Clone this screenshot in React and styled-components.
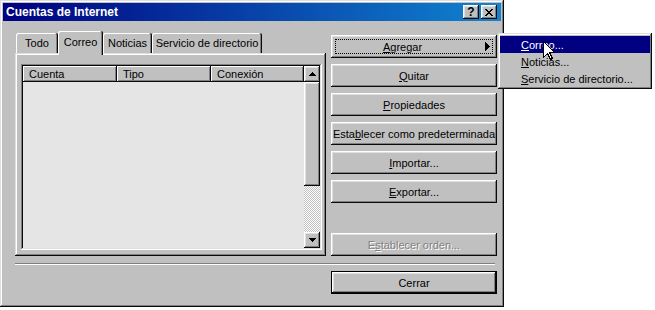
import React from 'react';
import styled, { createGlobalStyle, css } from 'styled-components';

const GlobalStyle = createGlobalStyle`
  html, body { margin: 0; padding: 0; background: #fff; }
  body { font-family: 'Liberation Sans', Arial, sans-serif; font-size: 11px; color: #000; }
  #root { position: relative; width: 655px; height: 310px; overflow: hidden; }
`;

const windowBevel = css`
  box-shadow: inset -1px -1px #0a0a0a, inset 1px 1px #dfdfdf, inset -2px -2px #808080, inset 2px 2px #fff;
`;
const buttonBevel = css`
  box-shadow: inset -1px -1px #0a0a0a, inset 1px 1px #fff, inset -2px -2px #808080, inset 2px 2px #dfdfdf;
`;
const sunkenBevel = css`
  box-shadow: inset -1px -1px #fff, inset 1px 1px #808080, inset -2px -2px #dfdfdf, inset 2px 2px #0a0a0a;
`;

const Window = styled.div`
  width: 504px;
  height: 307px;
  box-sizing: border-box;
  padding: 3px;
  background: #c0c0c0;
  ${windowBevel}
  display: flex;
  flex-direction: column;
`;

const TitleBar = styled.div`
  height: 18px;
  display: flex;
  align-items: center;
  padding: 0 4px 0 3px;
  background: linear-gradient(90deg, #000080, #1084d0);
  color: #fff;
  font-weight: bold;
  font-size: 12px;
`;

const Title = styled.span`
  flex: 1;
`;

const TitleButtons = styled.div`
  display: flex;
  gap: 2px;
`;

const TitleButton = styled.div`
  width: 16px;
  height: 14px;
  box-sizing: border-box;
  background: #c0c0c0;
  ${buttonBevel}
  display: flex;
  align-items: center;
  justify-content: center;
  color: #000;
  font-size: 12px;
  font-weight: bold;
  line-height: 1;
`;

const Body = styled.div`
  padding: 10px 4px 0 12px;
  display: flex;
  flex-direction: column;
`;

const MainRow = styled.div`
  display: flex;
  gap: 5px;
`;

const LeftCol = styled.div`
  width: 311px;
  display: flex;
  flex-direction: column;
`;

const TabStrip = styled.div`
  height: 22px;
  display: flex;
  align-items: flex-end;
  padding-left: 1px;
`;

const Tab = styled.div`
  width: ${(p) => p.$w}px;
  height: ${(p) => (p.$active ? 24 : 20)}px;
  margin-bottom: ${(p) => (p.$active ? -2 : 0)}px;
  padding-bottom: ${(p) => (p.$active ? 3 : 0)}px;
  box-sizing: border-box;
  display: flex;
  align-items: center;
  justify-content: center;
  background: #c0c0c0;
  position: relative;
  z-index: ${(p) => (p.$active ? 1 : 0)};
  border-radius: 2px 2px 0 0;
  box-shadow: inset -1px 0 #0a0a0a, inset 1px 1px #fff, inset -2px 0 #808080;
  white-space: nowrap;
`;

const Panel = styled.div`
  height: 203px;
  box-sizing: border-box;
  background: #c0c0c0;
  ${windowBevel}
  padding: 11px 4px 6px 6px;
`;

const ListView = styled.div`
  height: 100%;
  box-sizing: border-box;
  padding: 2px;
  ${sunkenBevel}
  background: #e5e5e5;
  display: flex;
`;

const ListMain = styled.div`
  flex: 1;
  display: flex;
  flex-direction: column;
`;

const HeaderRow = styled.div`
  height: 16px;
  display: flex;
`;

const HeaderCell = styled.div`
  width: ${(p) => p.$w}px;
  box-sizing: border-box;
  padding-left: 6px;
  background: #c0c0c0;
  box-shadow: inset -1px -1px #0a0a0a, inset 1px 1px #fff, inset -2px -2px #808080;
  display: flex;
  align-items: center;
`;

const ListBody = styled.div`
  flex: 1;
  background: #e5e5e5;
`;

const ScrollBar = styled.div`
  width: 16px;
  display: flex;
  flex-direction: column;
`;

const ScrollButton = styled.div`
  height: 16px;
  box-sizing: border-box;
  background: #c0c0c0;
  ${buttonBevel}
  display: flex;
  align-items: center;
  justify-content: center;
`;

const Thumb = styled.div`
  height: 104px;
  background: #c0c0c0;
  ${buttonBevel}
`;

const Track = styled.div`
  flex: 1;
  background-color: #c0c0c0;
  background-image: conic-gradient(#fff 25%, #c0c0c0 0 50%, #fff 0 75%, #c0c0c0 0);
  background-size: 2px 2px;
`;

const RightCol = styled.div`
  width: 166px;
  padding-top: 4px;
  display: flex;
  flex-direction: column;
  gap: 6px;
`;

const Button = styled.div`
  height: 23px;
  width: 166px;
  box-sizing: border-box;
  background: #c0c0c0;
  ${buttonBevel}
  display: flex;
  align-items: center;
  justify-content: center;
  position: relative;
  white-space: nowrap;
  color: ${(p) => (p.$disabled ? '#808080' : '#000')};
  text-shadow: ${(p) => (p.$disabled ? '1px 1px #fff' : 'none')};
  ${(p) => p.$pushTop && css`margin-top: auto;`}
  ${(p) =>
    p.$default &&
    css`
      border: 1px solid #000;
      align-self: flex-end;
    `}
  ${(p) =>
    p.$focused &&
    css`
      padding: 0 7px 0 2px;
      &::after {
        content: '';
        position: absolute;
        left: 4px;
        top: 4px;
        right: 4px;
        bottom: 4px;
        border: 1px dotted #000;
      }
    `}
`;

const ButtonLabel = styled.span`
  flex: 1;
  text-align: center;
`;

const SubArrow = styled.svg`
  margin-left: 13px;
  display: block;
`;

const U = styled.span`
  text-decoration: underline;
  text-underline-offset: 1px;
`;

const Separator = styled.div`
  margin-top: 7px;
  width: 480px;
  height: 0;
  border-top: 1px solid #808080;
  border-bottom: 1px solid #fff;
`;

const Footer = styled.div`
  margin-top: 6px;
  display: flex;
  justify-content: flex-end;
`;

const Menu = styled.div`
  position: absolute;
  left: 498px;
  top: 33px;
  width: 154px;
  box-sizing: border-box;
  padding: 3px 2px 2px;
  background: #c0c0c0;
  ${windowBevel}
  z-index: 5;
`;

const MenuItem = styled.div`
  height: 17px;
  display: flex;
  align-items: center;
  padding-left: 21px;
  white-space: nowrap;
  background: ${(p) => (p.$hl ? '#000080' : 'transparent')};
  color: ${(p) => (p.$hl ? '#fff' : '#000')};
`;

const Cursor = styled.svg`
  position: absolute;
  left: 543px;
  top: 41px;
  z-index: 6;
`;

const Pixels = ({ rows, color = '#000' }) => (
  <>
    {rows.map(([x, y, w, h], i) => (
      <rect key={i} x={x} y={y} width={w} height={h} fill={color} />
    ))}
  </>
);

const CloseGlyph = () => (
  <svg width="8" height="7" viewBox="0 0 8 7" shapeRendering="crispEdges">
    <Pixels
      rows={[
        [0, 0, 2, 1], [6, 0, 2, 1],
        [1, 1, 2, 1], [5, 1, 2, 1],
        [2, 2, 4, 1],
        [3, 3, 2, 1],
        [2, 4, 4, 1],
        [1, 5, 2, 1], [5, 5, 2, 1],
        [0, 6, 2, 1], [6, 6, 2, 1],
      ]}
    />
  </svg>
);

const UpGlyph = () => (
  <svg width="7" height="4" viewBox="0 0 7 4" shapeRendering="crispEdges">
    <Pixels rows={[[3, 0, 1, 1], [2, 1, 3, 1], [1, 2, 5, 1], [0, 3, 7, 1]]} />
  </svg>
);

const DownGlyph = () => (
  <svg width="7" height="4" viewBox="0 0 7 4" shapeRendering="crispEdges">
    <Pixels rows={[[0, 0, 7, 1], [1, 1, 5, 1], [2, 2, 3, 1], [3, 3, 1, 1]]} />
  </svg>
);

const buttons = [
  { key: 'q', label: <><U>Q</U>uitar</> },
  { key: 'p', label: <><U>P</U>ropiedades</> },
  { key: 'e', label: <>Esta<U>b</U>lecer como predeterminada</> },
  { key: 'i', label: <><U>I</U>mportar...</> },
  { key: 'x', label: <><U>E</U>xportar...</> },
];

export default function App() {
  return (
    <>
      <GlobalStyle />
      <Window>
        <TitleBar>
          <Title>Cuentas de Internet</Title>
          <TitleButtons>
            <TitleButton>?</TitleButton>
            <TitleButton>
              <CloseGlyph />
            </TitleButton>
          </TitleButtons>
        </TitleBar>
        <Body>
          <MainRow>
            <LeftCol>
              <TabStrip>
                <Tab $w={42}>Todo</Tab>
                <Tab $w={45} $active>Correo</Tab>
                <Tab $w={49}>Noticias</Tab>
                <Tab $w={110}>Servicio de directorio</Tab>
              </TabStrip>
              <Panel>
                <ListView>
                  <ListMain>
                    <HeaderRow>
                      <HeaderCell $w={94}>Cuenta</HeaderCell>
                      <HeaderCell $w={94}>Tipo</HeaderCell>
                      <HeaderCell $w={93}>Conexión</HeaderCell>
                    </HeaderRow>
                    <ListBody />
                  </ListMain>
                  <ScrollBar>
                    <ScrollButton>
                      <UpGlyph />
                    </ScrollButton>
                    <Thumb />
                    <Track />
                    <ScrollButton>
                      <DownGlyph />
                    </ScrollButton>
                  </ScrollBar>
                </ListView>
              </Panel>
            </LeftCol>
            <RightCol>
              <Button $focused>
                <ButtonLabel>
                  <U>A</U>gregar
                </ButtonLabel>
                <SubArrow width="5" height="9" viewBox="0 0 5 9" shapeRendering="crispEdges">
                  <Pixels rows={[[0, 0, 1, 9], [1, 1, 1, 7], [2, 2, 1, 5], [3, 3, 1, 3], [4, 4, 1, 1]]} />
                </SubArrow>
              </Button>
              {buttons.map((b) => (
                <Button key={b.key}>{b.label}</Button>
              ))}
              <Button $disabled $pushTop>
                E<U>s</U>tablecer orden...
              </Button>
            </RightCol>
          </MainRow>
          <Separator />
          <Footer>
            <Button $default>Cerrar</Button>
          </Footer>
        </Body>
      </Window>
      <Menu>
        <MenuItem $hl>
          <U>C</U>orreo...
        </MenuItem>
        <MenuItem>
          <U>N</U>oticias...
        </MenuItem>
        <MenuItem>
          <U>S</U>ervicio de directorio...
        </MenuItem>
      </Menu>
      <Cursor width="12" height="20" viewBox="0 0 12 20" shapeRendering="crispEdges">
        <path
          d="M0.5 0.5 L0.5 16.5 L4.5 12.5 L7.5 18.5 L9.5 17.5 L6.5 11.5 L11.5 11.5 Z"
          fill="#fff"
          stroke="#000"
          strokeWidth="1"
          strokeLinejoin="miter"
        />
      </Cursor>
    </>
  );
}
